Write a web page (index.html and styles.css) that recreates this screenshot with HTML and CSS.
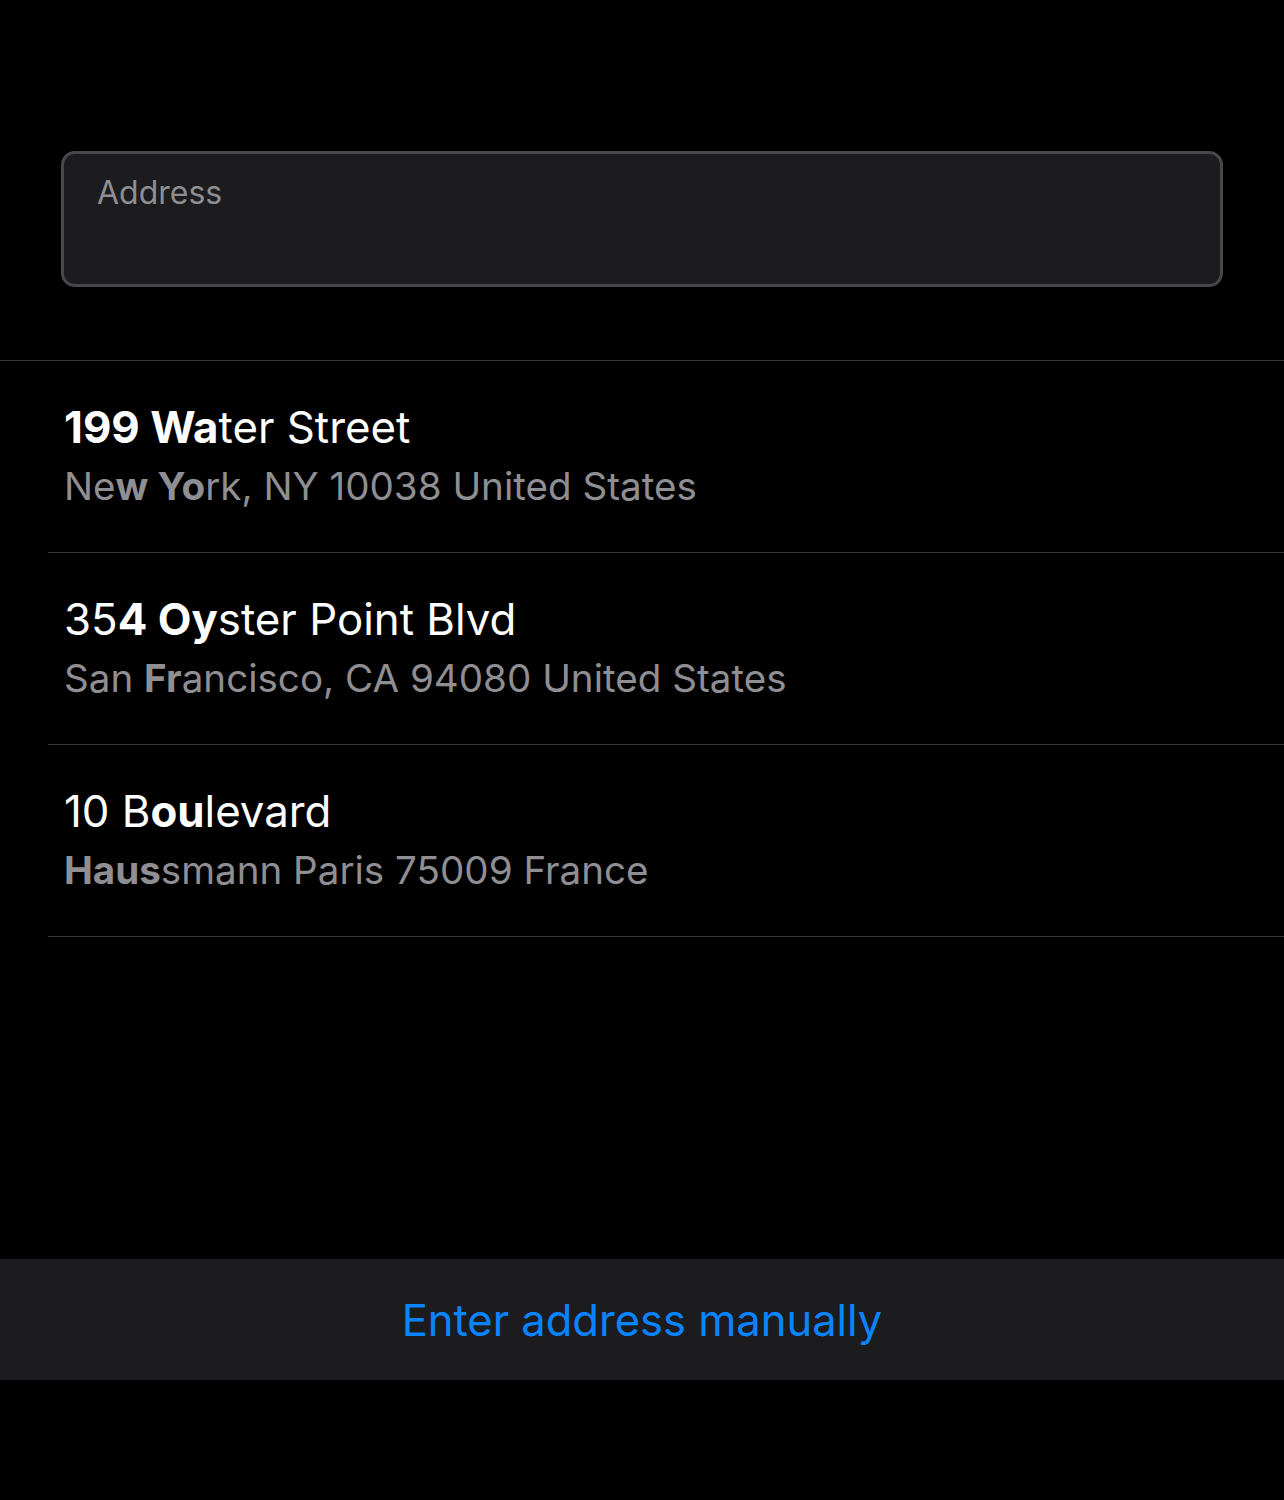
FILE: index.html
```html
<!DOCTYPE html>
<html>
<head>
<meta charset="utf-8">
<link rel="stylesheet" href="styles.css">
</head>
<body>
<div class="page">
  <div class="field-wrap">
    <div class="field"><span class="placeholder">Address</span></div>
  </div>
  <ul class="results">
    <li class="row">
      <div class="title"><b>199 Wa</b>ter Street</div>
      <div class="sub">Ne<b>w Yo</b>rk, NY 10038 United States</div>
    </li>
    <li class="row">
      <div class="title">35<b>4 Oy</b>ster Point Blvd</div>
      <div class="sub">San <b>Fr</b>ancisco, CA 94080 United States</div>
    </li>
    <li class="row">
      <div class="title">10 B<b>ou</b>levard</div>
      <div class="sub"><b>Haus</b>smann Paris 75009 France</div>
    </li>
  </ul>
  <div class="manual">Enter address manually</div>
</div>
</body>
</html>
```

FILE: styles.css
```css
html, body {
  margin: 0;
  padding: 0;
  background: #000;
}
body {
  font-family: Inter, "Noto Sans", "Liberation Sans", sans-serif;
  color: #fff;
  -webkit-font-smoothing: antialiased;
}
.page {
  width: 1284px;
  min-height: 1500px;
  display: flex;
  flex-direction: column;
}
.field-wrap {
  padding: 151px 61px 0 61px;
}
.field {
  height: 130px;
  background: #1c1c1e;
  border: 3px solid #48484a;
  border-radius: 14px;
  padding: 0 33px;
  box-sizing: content-box;
}
.placeholder {
  display: block;
  font-size: 32px;
  line-height: 40px;
  padding-top: 19px;
  color: #8e8e93;
}
.results {
  list-style: none;
  margin: 73px 0 0 0;
  padding: 0;
  border-top: 1px solid #38383a;
}
.row {
  margin-left: 48px;
  height: 191px;
  border-bottom: 1px solid #38383a;
  padding-left: 16px;
  box-sizing: content-box;
}
.row b {
  font-weight: 700;
}
.title {
  font-size: 43.8px;
  line-height: 50px;
  padding-top: 42px;
  color: #fff;
}
.sub {
  font-size: 38.6px;
  line-height: 50px;
  padding-top: 8px;
  color: #8e8e93;
}
.manual {
  margin-top: 322px;
  height: 121px;
  background: #1c1c1e;
  color: #0a84ff;
  font-size: 43.5px;
  display: flex;
  align-items: center;
  justify-content: center;
}
```
